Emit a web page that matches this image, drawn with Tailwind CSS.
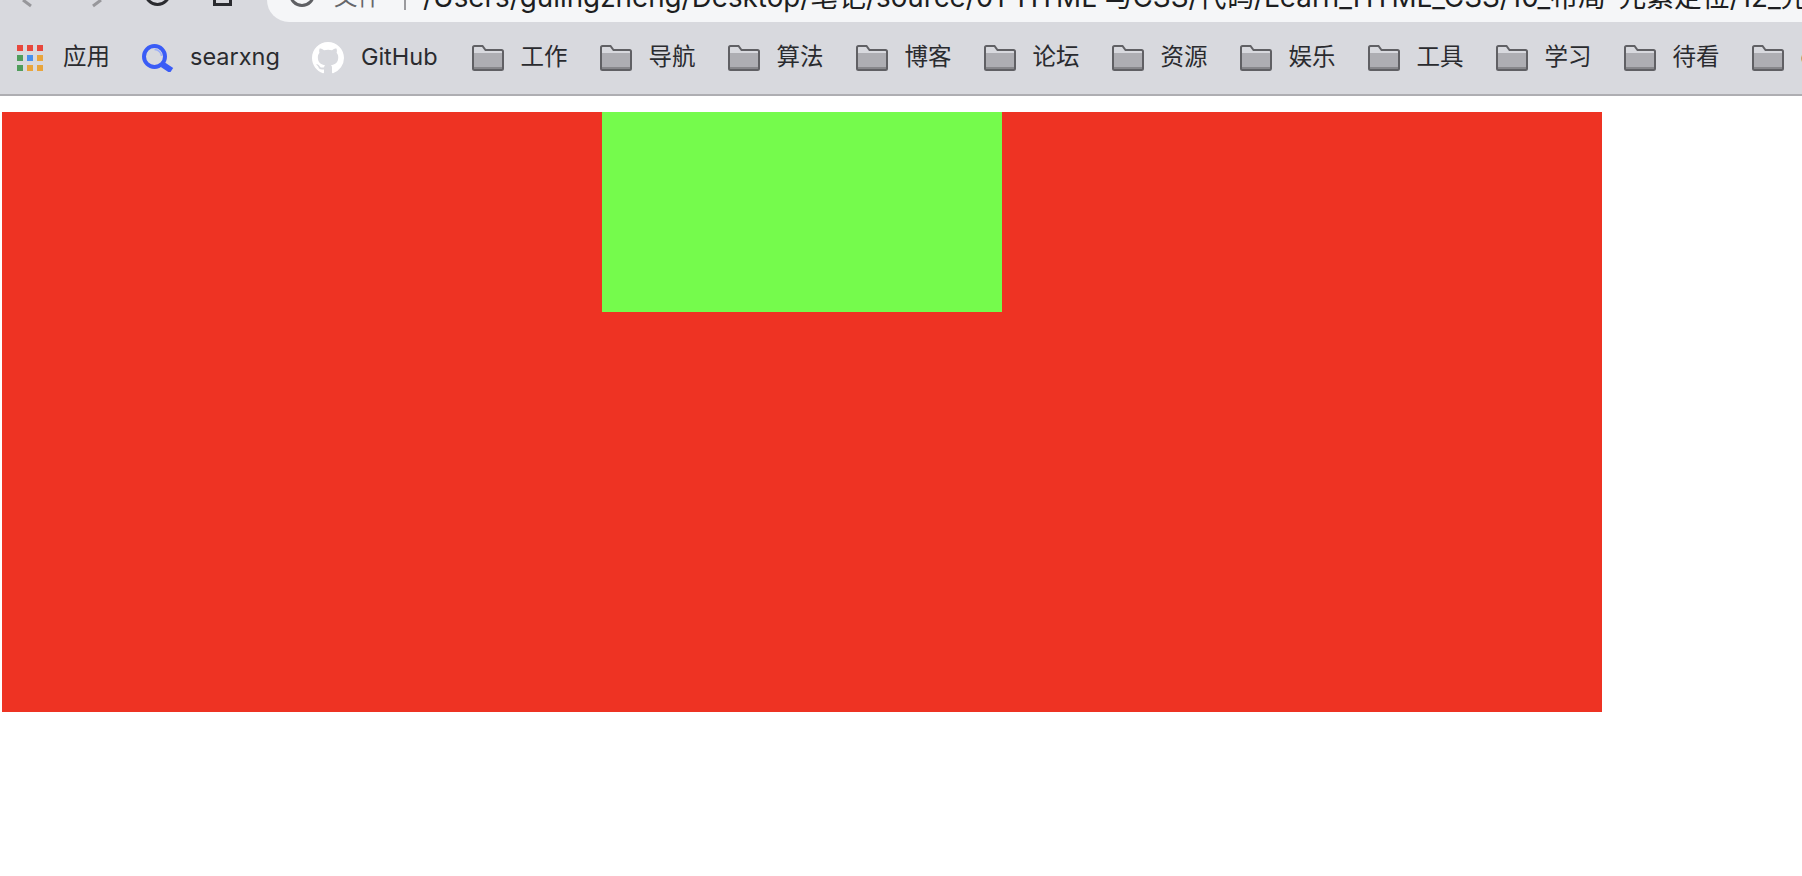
<!DOCTYPE html>
<html lang="zh-CN">
<head>
  <meta charset="UTF-8">
  <title>定位</title>
  <script src="https://cdn.jsdelivr.net/npm/@tailwindcss/browser@4"></script>
</head>
<body class="bg-white overflow-hidden font-['Inter','Noto_Sans_CJK_SC',sans-serif]">
  <!-- browser toolbar -->
  <header class="h-[96px] bg-[#d8d9de] border-b-2 border-[#aeaeb2] overflow-hidden">
    <!-- nav row, cut off by the top of the window -->
    <div class="h-[22px] flex">
      <svg class="w-[267px] h-[22px] shrink-0" viewBox="0 0 267 22" fill="none">
        <path d="M23 0L31 6" stroke="#97979b" stroke-width="3"/>
        <path d="M101 0L93 6" stroke="#97979b" stroke-width="3"/>
        <path d="M145.500 -7.500A12 12 0 0 0 169.500 -7.500" stroke="#2a2b2f" stroke-width="3"/>
        <path d="M214.500 -4V4.500H230.500V-4" stroke="#2a2b2f" stroke-width="3"/>
      </svg>
      <div class="flex-1 min-w-0 h-[44px] -mt-[22px] bg-[#f5f6f8] rounded-l-full flex items-center whitespace-nowrap overflow-hidden">
        <svg class="w-[26px] h-[26px] ml-[22px] shrink-0 -translate-y-[6px]" viewBox="0 0 26 26" fill="none">
          <circle cx="13" cy="13" r="11.500" stroke="#5f6064" stroke-width="3"/>
        </svg>
        <span class="ml-[19px] text-[23.500px] text-[#66676b] -translate-y-[3px]">文件</span>
        <span class="ml-[23px] w-[2px] h-[20px] bg-[#9a9a9e] shrink-0"></span>
        <span class="ml-[17px] text-[27.800px] text-[#1d1e21] -translate-y-[2px]">/Users/gulingzheng/Desktop/笔记/source/01-HTML 与CSS/代码/Learn_HTML_CSS/10_布局-元素定位/12_元素定位</span>
      </div>
    </div>

    <!-- bookmarks -->
    <nav class="h-[72px] pl-[17px] flex items-center gap-[32px] text-[23.500px] text-[#2a2b2f] whitespace-nowrap">
      <a class="flex items-center gap-[20px] shrink-0">
        <span class="grid grid-cols-3 gap-[4px] w-[26px]">
          <i class="h-[6px] bg-[#e8483c]"></i><i class="h-[6px] bg-[#e8483c]"></i><i class="h-[6px] bg-[#e8483c]"></i>
          <i class="h-[6px] bg-[#4f9d5b]"></i><i class="h-[6px] bg-[#4790ee]"></i><i class="h-[6px] bg-[#e9a53c]"></i>
          <i class="h-[6px] bg-[#4f9d5b]"></i><i class="h-[6px] bg-[#e9a53c]"></i><i class="h-[6px] bg-[#e9a53c]"></i>
        </span>
        <span class="pb-[2px]">应用</span>
      </a>
      <a class="flex items-center gap-[16px] shrink-0">
        <svg class="w-[32px] h-[28px]" viewBox="0 0 32 28" fill="none">
          <circle cx="12.500" cy="12.500" r="10.500" stroke="#3a5cf6" stroke-width="4"/>
          <path d="M12.500 5.500A7 7 0 0 1 19.500 12" stroke="#9db0f8" stroke-width="1.500"/>
          <path d="M20.500 20.500L29.500 26.500" stroke="#3a5cf6" stroke-width="6"/>
        </svg>
        <span class="pb-[2px]">searxng</span>
      </a>
      <a class="flex items-center gap-[17px] shrink-0 mr-[2px]">
        <svg class="w-[32px] h-[32px]" viewBox="0 0 16 16" fill="#fff">
          <path fill-rule="evenodd" d="M8 0C3.58 0 0 3.58 0 8c0 3.54 2.29 6.53 5.47 7.59.4.07.55-.17.55-.38 0-.19-.01-.82-.01-1.49-2.01.37-2.53-.49-2.69-.94-.09-.23-.48-.94-.82-1.13-.28-.15-.68-.52-.01-.53.63-.01 1.08.58 1.23.82.72 1.21 1.87.87 2.33.66.07-.52.28-.87.51-1.07-1.78-.2-3.64-.89-3.64-3.95 0-.87.31-1.59.82-2.15-.08-.2-.36-1.02.08-2.12 0 0 .67-.21 2.2.82.64-.18 1.32-.27 2-.27.68 0 1.36.09 2 .27 1.53-1.04 2.2-.82 2.2-.82.44 1.1.16 1.92.08 2.12.51.56.82 1.27.82 2.15 0 3.07-1.87 3.75-3.65 3.95.29.25.54.73.54 1.48 0 1.07-.01 1.93-.01 2.2 0 .21.15.46.55.38A8.013 8.013 0 0016 8c0-4.42-3.58-8-8-8z"/>
        </svg>
        <span class="pb-[2px]">GitHub</span>
      </a>
      <a class="flex items-center gap-[17px] shrink-0"><svg class="w-[32px] h-[26px]" viewBox="0 0 32 26" fill="none"><path d="M2 8H30V24H2Z" fill="#aeaeb3"/><path d="M2 22H30V24H2Z" fill="#87878b"/><path d="M1 23.500V2.500Q1 1 2.500 1H10.500L13.500 5H29.500Q31 5 31 6.500V23.500Q31 25 29.500 25H2.500Q1 25 1 23.500Z" stroke="#606064" stroke-width="2"/></svg><span class="pb-[2px]">工作</span></a>
      <a class="flex items-center gap-[17px] shrink-0"><svg class="w-[32px] h-[26px]" viewBox="0 0 32 26" fill="none"><path d="M2 8H30V24H2Z" fill="#aeaeb3"/><path d="M2 22H30V24H2Z" fill="#87878b"/><path d="M1 23.500V2.500Q1 1 2.500 1H10.500L13.500 5H29.500Q31 5 31 6.500V23.500Q31 25 29.500 25H2.500Q1 25 1 23.500Z" stroke="#606064" stroke-width="2"/></svg><span class="pb-[2px]">导航</span></a>
      <a class="flex items-center gap-[17px] shrink-0"><svg class="w-[32px] h-[26px]" viewBox="0 0 32 26" fill="none"><path d="M2 8H30V24H2Z" fill="#aeaeb3"/><path d="M2 22H30V24H2Z" fill="#87878b"/><path d="M1 23.500V2.500Q1 1 2.500 1H10.500L13.500 5H29.500Q31 5 31 6.500V23.500Q31 25 29.500 25H2.500Q1 25 1 23.500Z" stroke="#606064" stroke-width="2"/></svg><span class="pb-[2px]">算法</span></a>
      <a class="flex items-center gap-[17px] shrink-0"><svg class="w-[32px] h-[26px]" viewBox="0 0 32 26" fill="none"><path d="M2 8H30V24H2Z" fill="#aeaeb3"/><path d="M2 22H30V24H2Z" fill="#87878b"/><path d="M1 23.500V2.500Q1 1 2.500 1H10.500L13.500 5H29.500Q31 5 31 6.500V23.500Q31 25 29.500 25H2.500Q1 25 1 23.500Z" stroke="#606064" stroke-width="2"/></svg><span class="pb-[2px]">博客</span></a>
      <a class="flex items-center gap-[17px] shrink-0"><svg class="w-[32px] h-[26px]" viewBox="0 0 32 26" fill="none"><path d="M2 8H30V24H2Z" fill="#aeaeb3"/><path d="M2 22H30V24H2Z" fill="#87878b"/><path d="M1 23.500V2.500Q1 1 2.500 1H10.500L13.500 5H29.500Q31 5 31 6.500V23.500Q31 25 29.500 25H2.500Q1 25 1 23.500Z" stroke="#606064" stroke-width="2"/></svg><span class="pb-[2px]">论坛</span></a>
      <a class="flex items-center gap-[17px] shrink-0"><svg class="w-[32px] h-[26px]" viewBox="0 0 32 26" fill="none"><path d="M2 8H30V24H2Z" fill="#aeaeb3"/><path d="M2 22H30V24H2Z" fill="#87878b"/><path d="M1 23.500V2.500Q1 1 2.500 1H10.500L13.500 5H29.500Q31 5 31 6.500V23.500Q31 25 29.500 25H2.500Q1 25 1 23.500Z" stroke="#606064" stroke-width="2"/></svg><span class="pb-[2px]">资源</span></a>
      <a class="flex items-center gap-[17px] shrink-0"><svg class="w-[32px] h-[26px]" viewBox="0 0 32 26" fill="none"><path d="M2 8H30V24H2Z" fill="#aeaeb3"/><path d="M2 22H30V24H2Z" fill="#87878b"/><path d="M1 23.500V2.500Q1 1 2.500 1H10.500L13.500 5H29.500Q31 5 31 6.500V23.500Q31 25 29.500 25H2.500Q1 25 1 23.500Z" stroke="#606064" stroke-width="2"/></svg><span class="pb-[2px]">娱乐</span></a>
      <a class="flex items-center gap-[17px] shrink-0"><svg class="w-[32px] h-[26px]" viewBox="0 0 32 26" fill="none"><path d="M2 8H30V24H2Z" fill="#aeaeb3"/><path d="M2 22H30V24H2Z" fill="#87878b"/><path d="M1 23.500V2.500Q1 1 2.500 1H10.500L13.500 5H29.500Q31 5 31 6.500V23.500Q31 25 29.500 25H2.500Q1 25 1 23.500Z" stroke="#606064" stroke-width="2"/></svg><span class="pb-[2px]">工具</span></a>
      <a class="flex items-center gap-[17px] shrink-0"><svg class="w-[32px] h-[26px]" viewBox="0 0 32 26" fill="none"><path d="M2 8H30V24H2Z" fill="#aeaeb3"/><path d="M2 22H30V24H2Z" fill="#87878b"/><path d="M1 23.500V2.500Q1 1 2.500 1H10.500L13.500 5H29.500Q31 5 31 6.500V23.500Q31 25 29.500 25H2.500Q1 25 1 23.500Z" stroke="#606064" stroke-width="2"/></svg><span class="pb-[2px]">学习</span></a>
      <a class="flex items-center gap-[17px] shrink-0"><svg class="w-[32px] h-[26px]" viewBox="0 0 32 26" fill="none"><path d="M2 8H30V24H2Z" fill="#aeaeb3"/><path d="M2 22H30V24H2Z" fill="#87878b"/><path d="M1 23.500V2.500Q1 1 2.500 1H10.500L13.500 5H29.500Q31 5 31 6.500V23.500Q31 25 29.500 25H2.500Q1 25 1 23.500Z" stroke="#606064" stroke-width="2"/></svg><span class="pb-[2px]">待看</span></a>
      <a class="flex items-center gap-[17px] shrink-0"><svg class="w-[32px] h-[26px]" viewBox="0 0 32 26" fill="none"><path d="M2 8H30V24H2Z" fill="#aeaeb3"/><path d="M2 22H30V24H2Z" fill="#87878b"/><path d="M1 23.500V2.500Q1 1 2.500 1H10.500L13.500 5H29.500Q31 5 31 6.500V23.500Q31 25 29.500 25H2.500Q1 25 1 23.500Z" stroke="#606064" stroke-width="2"/></svg><span class="pb-[2px]">c</span></a>
    </nav>
  </header>

  <!-- page content -->
  <main class="pt-[16px] pl-[2px]">
    <div class="w-[1600px] h-[600px] bg-[#ee3323]">
      <div class="w-[400px] h-[200px] mx-auto bg-[#75fb4c]"></div>
    </div>
  </main>
</body>
</html>
